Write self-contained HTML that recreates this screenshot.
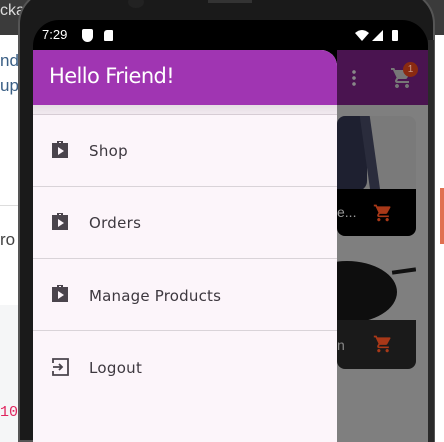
<!DOCTYPE html>
<html><head><style>
*{margin:0;padding:0;box-sizing:border-box}
body{width:444px;height:442px;overflow:hidden;background:#fff;position:relative;font-family:"Liberation Sans",sans-serif}
.a{position:absolute}
</style></head><body>
<div class="a" style="left:0;top:0;width:444px;height:35px;background:#3b3b3b"></div>
<div class="a" style="left:0;top:2px;color:#ddd;font-size:16px">cka</div>
<div class="a" style="left:0;top:35px;width:20px;height:170px;background:#fff"></div>
<div class="a" style="left:0;top:48px;color:#3a5f85;font-size:17px;line-height:25px">nd<br>up.</div>
<div class="a" style="left:0;top:205px;width:20px;height:1px;background:#ddd"></div>
<div class="a" style="left:0;top:230px;color:#444;font-size:17px">ro</div>
<div class="a" style="left:0;top:305px;width:20px;height:137px;background:#f5f6f7"></div>
<div class="a" style="left:0;top:404px;color:#e0245e;font-size:15px;font-family:'Liberation Mono',monospace">10</div>
<div class="a" style="left:434px;top:35px;width:10px;height:407px;background:#fff"></div>
<div class="a" style="left:440px;top:188px;width:4px;height:56px;background:#e07050"></div>
<!-- phone -->
<div class="a" style="left:18px;top:-10px;width:417px;height:452px;background:#1a1a1a;border-radius:34px 34px 0 0;border:2px solid #555"></div>
<div class="a" style="left:128px;top:-4px;width:16px;height:12px;border-radius:50%;background:#222"></div>
<div class="a" style="left:208px;top:0;width:44px;height:3px;background:#333"></div>
<div class="a" style="left:33px;top:20px;width:395px;height:422px;background:#000;border-radius:26px 26px 0 0"></div>
<div class="a" style="left:42px;top:27px;color:#fff;font-size:13px">7:29</div>
<div class="a" style="left:82px;top:29px;width:11px;height:13px;background:#fff;border-radius:2px 2px 6px 6px"></div>
<div class="a" style="left:104px;top:30px;width:9px;height:11px;background:#fff;border-radius:3px 1px 1px 1px"></div>
<svg class="a" style="left:355px;top:29px" width="50" height="14"><path d="M0 4Q7 -2 14 4L7 12Z" fill="#fff"/><path d="M28 1V12H17Z" fill="#fff"/><rect x="37" y="1" width="6" height="11" rx="1" fill="#fff"/></svg>
<!-- app behind -->
<div class="a" style="left:337px;top:50px;width:91px;height:55px;background:#4a1450"></div>
<div class="a" style="left:352px;top:69px;width:4px;height:18px;background:radial-gradient(circle,#888 1.6px,transparent 2px) 0 0/4px 6px"></div>
<svg class="a" style="left:390px;top:66px" width="24" height="24" viewBox="0 0 24 24"><path d="M7 18c-1.1 0-2 .9-2 2s.9 2 2 2 2-.9 2-2-.9-2-2-2zM1 2v2h2l3.6 7.6-1.4 2.4c-.1.3-.2.6-.2 1 0 1.1.9 2 2 2h12v-2H7.4c-.1 0-.2-.1-.2-.2v-.1l.9-1.7h7.4c.8 0 1.4-.4 1.7-1l3.6-6.5c.1-.2.2-.3.2-.5 0-.6-.4-1-1-1H5.2l-.9-2H1zm16 16c-1.1 0-2 .9-2 2s.9 2 2 2 2-.9 2-2-.9-2-2-2z" fill="#777"/></svg>
<div class="a" style="left:403px;top:62px;width:15px;height:15px;border-radius:50%;background:#8a2a10;color:#c98;font-size:10px;text-align:center;line-height:15px">1</div>
<div class="a" style="left:337px;top:105px;width:91px;height:337px;background:#7f7f7f"></div>
<div class="a" style="left:337px;top:116px;width:79px;height:120px;background:#7a7a7a;border-radius:8px;overflow:hidden">
 <div class="a" style="left:0;top:0;width:30px;height:75px;background:#1e2030;border-radius:0 0 10px 0"></div>
 <div class="a" style="left:28px;top:0;width:10px;height:75px;background:#2a2c3c;transform:skewX(8deg)"></div>
 <div class="a" style="left:0;top:73px;width:79px;height:47px;background:#000"></div>
 <div class="a" style="left:0;top:88px;color:#999;font-size:14px">e...</div>
</div>
<div class="a" style="left:337px;top:255px;width:79px;height:114px;border-radius:8px;overflow:hidden">
 <div class="a" style="left:-40px;top:6px;width:100px;height:62px;background:#0e0e0e;border-radius:50%"></div>
 <div class="a" style="left:55px;top:14px;width:24px;height:4px;background:#111;transform:rotate(-8deg)"></div>
 <div class="a" style="left:0;top:65px;width:79px;height:49px;background:#1a1a1a"></div>
 <div class="a" style="left:0;top:82px;color:#888;font-size:14px">n</div>
</div>
<svg class="a" style="left:373px;top:203px" width="20" height="20" viewBox="0 0 24 24"><path d="M7 18c-1.1 0-2 .9-2 2s.9 2 2 2 2-.9 2-2-.9-2-2-2zM1 2v2h2l3.6 7.6-1.4 2.4c-.1.3-.2.6-.2 1 0 1.1.9 2 2 2h12v-2H7.4c-.1 0-.2-.1-.2-.2v-.1l.9-1.7h7.4c.8 0 1.4-.4 1.7-1l3.6-6.5c.1-.2.2-.3.2-.5 0-.6-.4-1-1-1H5.2l-.9-2H1zm16 16c-1.1 0-2 .9-2 2s.9 2 2 2 2-.9 2-2-.9-2-2-2z" fill="#a83818"/></svg>
<svg class="a" style="left:373px;top:334px" width="20" height="20" viewBox="0 0 24 24"><path d="M7 18c-1.1 0-2 .9-2 2s.9 2 2 2 2-.9 2-2-.9-2-2-2zM1 2v2h2l3.6 7.6-1.4 2.4c-.1.3-.2.6-.2 1 0 1.1.9 2 2 2h12v-2H7.4c-.1 0-.2-.1-.2-.2v-.1l.9-1.7h7.4c.8 0 1.4-.4 1.7-1l3.6-6.5c.1-.2.2-.3.2-.5 0-.6-.4-1-1-1H5.2l-.9-2H1zm16 16c-1.1 0-2 .9-2 2s.9 2 2 2 2-.9 2-2-.9-2-2-2z" fill="#a83818"/></svg>
<div class="a" style="left:428px;top:40px;width:6px;height:402px;background:#2a2a2a"></div>
<!-- drawer -->
<div class="a" style="left:33px;top:50px;width:304px;height:392px;background:#fcf5fa;border-radius:0 16px 0 0;overflow:hidden">
 <div class="a" style="left:0;top:0;width:304px;height:55px;background:#a035b2"></div>
 <div class="a" style="left:16px;top:14px;color:#fff;font-size:21px;font-family:'DejaVu Sans',sans-serif;letter-spacing:-0.6px">Hello Friend!</div>
 <div class="a" style="left:0;top:55px;width:304px;height:10px;background:linear-gradient(#e5dde3,#f2eaf0)"></div>
 <div class="a" style="left:0;top:64px;width:304px;height:1px;background:#d6ccd4"></div>
 <div class="a" style="left:0;top:136px;width:304px;height:1px;background:#d9d3d8"></div>
 <div class="a" style="left:0;top:208px;width:304px;height:1px;background:#d9d3d8"></div>
 <div class="a" style="left:0;top:280px;width:304px;height:1px;background:#d9d3d8"></div>
</div>
<svg class="a" style="left:50px;top:139px" width="22" height="22" viewBox="0 0 22 22"><path d="M7 4V2h6v2h5v15H2V4zM9 4h2V3H9z" fill="#4a444c" fill-rule="evenodd"/><path d="M8 8l6 4-6 4z" fill="#fcf5fa"/></svg>
<svg class="a" style="left:50px;top:211px" width="22" height="22" viewBox="0 0 22 22"><path d="M7 4V2h6v2h5v15H2V4zM9 4h2V3H9z" fill="#4a444c" fill-rule="evenodd"/><path d="M8 8l6 4-6 4z" fill="#fcf5fa"/></svg>
<svg class="a" style="left:50px;top:283px" width="22" height="22" viewBox="0 0 22 22"><path d="M7 4V2h6v2h5v15H2V4zM9 4h2V3H9z" fill="#4a444c" fill-rule="evenodd"/><path d="M8 8l6 4-6 4z" fill="#fcf5fa"/></svg>
<svg class="a" style="left:51px;top:357px" width="20" height="20" viewBox="0 0 20 20" fill="none" stroke="#4a444c" stroke-width="1.8"><path d="M2 6V2h15v16H2v-4"/><path d="M2 10h9M8 7l3 3-3 3"/></svg>
<div class="a" style="left:89px;top:142px;color:#3d383f;letter-spacing:.3px;font-family:'DejaVu Sans',sans-serif;font-size:15px">Shop</div>
<div class="a" style="left:89px;top:214px;color:#3d383f;font-size:15px;letter-spacing:.3px;font-family:'DejaVu Sans',sans-serif">Orders</div>
<div class="a" style="left:89px;top:287px;color:#3d383f;font-size:15px;letter-spacing:.2px;font-family:'DejaVu Sans',sans-serif">Manage Products</div>
<div class="a" style="left:89px;top:359px;color:#3d383f;font-size:15px;letter-spacing:.3px;font-family:'DejaVu Sans',sans-serif">Logout</div>
</body></html>
